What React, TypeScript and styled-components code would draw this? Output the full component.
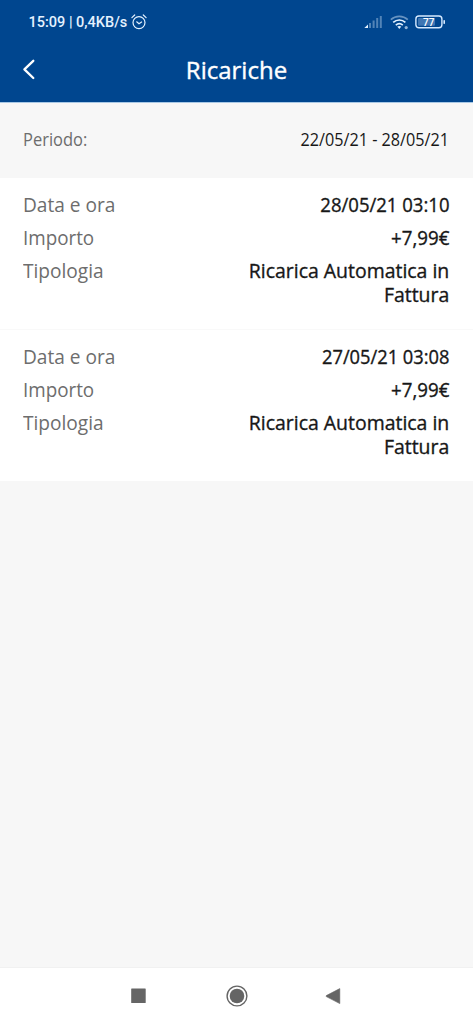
import React from 'react';
import styled, { createGlobalStyle } from 'styled-components';

const GlobalStyle = createGlobalStyle`
  *, *::before, *::after { box-sizing: border-box; }
  body { margin: 0; background: #f7f7f7; }
`;

const Screen = styled.div`
  display: flex;
  flex-direction: column;
  width: 473px;
  height: 1024px;
  overflow: hidden;
  background: #f7f7f7;
  font-family: 'Open Sans', 'Noto Sans', sans-serif;
`;

const Header = styled.header`
  height: 103px;
  flex: none;
  background: #00468f;
  color: #fff;
  border-bottom: 1px solid #a9c9e6;
`;

const StatusBar = styled.div`
  height: 44px;
  padding: 0 27px 0 28.5px;
  display: flex;
  align-items: center;
  color: #e4f2ff;
`;

const Clock = styled.span`
  font: 500 14.5px/20px Roboto, sans-serif;
  padding-top: 2px;
  white-space: pre;
`;

const AlarmIcon = styled.svg`
  margin-left: 3.5px;
`;

const StatusIcons = styled.div`
  display: flex;
  align-items: center;
  margin-left: auto;
`;

const WifiIcon = styled.svg`
  margin: 1px 6px 0 7px;
`;

const TitleBar = styled.div`
  display: grid;
  grid-template-columns: 60px 1fr 60px;
  align-items: center;
  height: 52px;
`;

const BackButton = styled.button`
  display: flex;
  width: 60px;
  height: 52px;
  padding: 0 0 0 22px;
  align-items: center;
  background: none;
  border: 0;
  color: inherit;
`;

const Title = styled.h1`
  margin: 0;
  text-align: center;
  font-size: 24px;
  line-height: 32px;
  font-weight: 400;
  -webkit-text-stroke: 0.4px currentColor;
`;

const Period = styled.section`
  display: flex;
  justify-content: space-between;
  align-items: center;
  flex: none;
  height: 75px;
  padding: 0 24px 3px 23px;
  font-size: 18px;
  line-height: 24px;
`;

const Card = styled.dl`
  display: flex;
  flex-direction: column;
  gap: 9px;
  flex: none;
  margin: 0;
  padding: 15px 24px 23px 23px;
  background: #fff;
  font-size: 20px;
  line-height: 24px;

  & + & {
    padding-bottom: 22px;
    box-shadow: 0 -1px #f9f9f9;
  }
`;

const Row = styled.div`
  display: flex;
  justify-content: space-between;
`;

const Label = styled.dt<{ $stretch: number }>`
  color: #6d6d6d;
  white-space: nowrap;
  transform: scaleX(${(p) => p.$stretch});
  transform-origin: left;
`;

const Value = styled.dd<{ $stretch: number; $strong?: boolean }>`
  margin: 0;
  color: #171717;
  text-align: right;
  white-space: pre-line;
  transform: scaleX(${(p) => p.$stretch});
  transform-origin: right;
  -webkit-text-stroke: ${(p) => (p.$strong ? '0.35px' : '0')} currentColor;
`;

const PeriodLabel = styled(Label).attrs({ as: 'span' })``;
const PeriodValue = styled(Value).attrs({ as: 'span' })``;

const NavBar = styled.nav`
  display: flex;
  justify-content: center;
  align-items: center;
  gap: 76px;
  height: 57px;
  margin-top: auto;
  background: #fff;
  border-top: 1px solid #f1f1f1;
  color: #656565;
`;

const recharges = [
  { date: '28/05/21 03:10', dateStretch: 0.926, amount: '+7,99€' },
  { date: '27/05/21 03:08', dateStretch: 0.914, amount: '+7,99€' },
];

export default function App() {
  return (
    <Screen>
      <GlobalStyle />
      <Header>
        <StatusBar>
          <Clock>15:09 | 0,4KB/s</Clock>
          <AlarmIcon width="16" height="16" viewBox="0 0 16 16" fill="none" stroke="currentColor" strokeWidth="1.2" strokeLinecap="round">
            <circle cx="8" cy="8.6" r="6" />
            <path d="M5.7 7.8l2.3 2L10.6 8M.9 3.6L3.7 1M15.1 3.6L12.3 1" />
          </AlarmIcon>
          <StatusIcons>
            <svg width="19" height="14" viewBox="0 0 19 14" fill="currentColor">
              <path d="M.3 13L4 9.4V13z" />
              <g opacity=".36">
                <rect x="5" y="8" width="2" height="5" />
                <rect x="8.6" y="5.5" width="2" height="7.5" />
                <rect x="12.2" y="3" width="2" height="10" />
                <rect x="15.8" y="1" width="2" height="12" />
              </g>
            </svg>
            <WifiIcon width="19" height="15" viewBox="0 0 19 15" fill="none" stroke="currentColor" strokeWidth="1.7">
              <path d="M.8 4.6c4.8-4.4 12.2-4.4 17 0" opacity=".45" />
              <path d="M3.2 7.4c3.6-3.2 8.6-3.2 12.2 0M5.8 10.1c2.2-1.8 4.8-1.8 7 0" />
              <path d="M7.3 11.6L9.3 14l2-2.4c-1.2-.9-2.8-.9-4 0z" fill="currentColor" stroke="none" />
              <circle cx="16.2" cy="12.6" r="1.6" fill="currentColor" stroke="none" opacity=".65" />
            </WifiIcon>
            <svg width="31" height="14" viewBox="0 0 31 14">
              <rect x=".9" y="1" width="26" height="11.8" rx="3" fill="none" stroke="#d6eaff" strokeWidth="1.4" />
              <rect x="3" y="3" width="17" height="7.8" rx="1" fill="#3f76b3" />
              <rect x="28.4" y="5" width="1.6" height="4" rx=".7" fill="#d6eaff" />
              <text x="13.7" y="10.6" textAnchor="middle" fill="#fff" fontFamily="Roboto, sans-serif" fontSize="10" fontWeight="500">77</text>
            </svg>
          </StatusIcons>
        </StatusBar>
        <TitleBar>
          <BackButton aria-label="Indietro">
            <svg width="14" height="22" viewBox="0 0 14 22" fill="none" stroke="currentColor" strokeWidth="2.3" strokeLinecap="round" strokeLinejoin="round">
              <path d="M11.3 1.8L2.4 10.4L11.3 19" />
            </svg>
          </BackButton>
          <Title>Ricariche</Title>
        </TitleBar>
      </Header>

      <Period>
        <PeriodLabel $stretch={0.915}>Periodo:</PeriodLabel>
        <PeriodValue $stretch={0.9}>22/05/21 - 28/05/21</PeriodValue>
      </Period>

      {recharges.map((r) => (
        <Card key={r.date}>
          <Row>
            <Label $stretch={0.955}>Data e ora</Label>
            <Value $stretch={r.dateStretch} $strong>{r.date}</Value>
          </Row>
          <Row>
            <Label $stretch={0.94}>Importo</Label>
            <Value $stretch={0.935} $strong>{r.amount}</Value>
          </Row>
          <Row>
            <Label $stretch={0.955}>Tipologia</Label>
            <Value $stretch={0.972} $strong>{'Ricarica Automatica in\nFattura'}</Value>
          </Row>
        </Card>
      ))}

      <NavBar>
        <svg width="22" height="22" viewBox="0 0 22 22" fill="currentColor">
          <rect x="3.2" y="3.6" width="14.5" height="14.5" rx=".5" />
        </svg>
        <svg width="22" height="22" viewBox="0 0 22 22" fill="currentColor">
          <circle cx="11" cy="11" r="9.9" fill="none" stroke="currentColor" strokeWidth="1.4" />
          <circle cx="11" cy="11" r="7.3" />
        </svg>
        <svg width="22" height="22" viewBox="0 0 22 22" fill="currentColor">
          <path d="M15.8 3.6v15L2.3 11.6q-.7-.5 0-1z" stroke="currentColor" strokeWidth=".6" strokeLinejoin="round" />
        </svg>
      </NavBar>
    </Screen>
  );
}
